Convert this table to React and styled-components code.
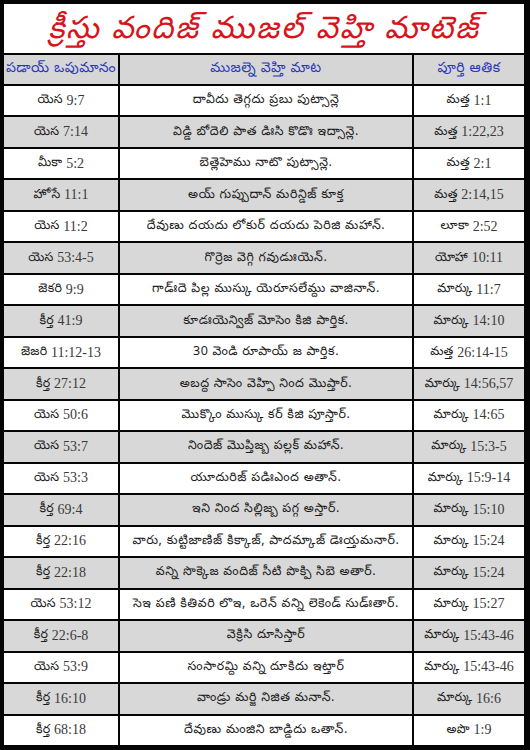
import React from 'react'
import styled, { createGlobalStyle } from 'styled-components'

const GlobalStyle = createGlobalStyle`
html, body {
  margin: 0;
  padding: 0;
  background: #000;
}
`

const StyledTable = styled.div`
box-sizing: border-box;
width: 530px;
height: 750px;
padding: 4px 6px 5px 4px;
background: #050505;
display: grid;
grid-template-columns: 114px 292px 110px;
grid-template-rows: 49px 29px repeat(21, 1fr);
gap: 2px;
font-family: 'Noto Sans Telugu', 'Noto Sans', 'DejaVu Sans', sans-serif;
`

const StyledTitle = styled.div`
grid-column: 1 / 4;
background: #fff;
display: flex;
align-items: center;
justify-content: center;
padding-top: 6px;
color: #d8141c;
font-size: 31px;
font-style: italic;
letter-spacing: 2px;
`

const StyledHead = styled.div`
background: #d6d6d6;
display: flex;
align-items: center;
justify-content: center;
color: #2a36c0;
font-size: 14px;
letter-spacing: 0.5px;
white-space: nowrap;
overflow: hidden;
`

const StyledCell = styled.div`
background: ${(props) => (props.shade ? '#d8d8d8' : '#fff')};
display: flex;
align-items: center;
justify-content: center;
color: #1a1a1a;
font-size: 12.5px;
letter-spacing: ${(props) => (props.wide ? '0.6px' : '0.2px')};
white-space: nowrap;
overflow: hidden;
`

const StyledRef = styled.span`
font-family: 'Liberation Serif', serif;
font-size: 14px;
letter-spacing: 0;
color: #3a3a3a;
`

const rows = [
  ['యెస', '9:7', 'దావీదు తెగ్గదు ప్రబు పుట్సాన్లె', 'మత్త', '1:1'],
  ['యెస', '7:14', 'విడ్డి బోదెలి పాత డిఃసి కొడొః ఇద్సాన్లె.', 'మత్త', '1:22,23'],
  ['మీకా', '5:2', 'బెత్లెహెము నాటొ పుట్సాన్లె.', 'మత్త', '2:1'],
  ['హోసే', '11:1', 'అయ్ గుప్పుదాన్ మరిన్డిజ్ కూక్త', 'మత్త', '2:14,15'],
  ['యెస', '11:2', 'దేవుణు దయదు లోకుర్ దయదు పెరిజి మహాన్.', 'లూకా', '2:52'],
  ['యెస', '53:4-5', 'గొర్రెజ వెగ్గి గవుడుఃయెన్.', 'యోహా', '10:11'],
  ['జెకరి', '9:9', 'గాడ్ఃదె పిల్ల ముస్కు యెరూసలేమ్దు వాజినాన్.', 'మార్కు', '11:7'],
  ['కీర్త', '41:9', 'కూడఃయెన్విజ్ మోసెం కిజి పార్తిక.', 'మార్కు', '14:10'],
  ['జెజరి', '11:12-13', '30 వెండి రూపాయ్ జ పార్తిక.', 'మత్త', '26:14-15'],
  ['కీర్త', '27:12', 'అబద్ద సాసెం వెహ్పి నింద మొప్తార్.', 'మార్కు', '14:56,57'],
  ['యెస', '50:6', 'మొక్కొం ముస్కు కర్ కిజి పూస్తార్.', 'మార్కు', '14:65'],
  ['యెస', '53:7', 'నిందెజ్ మొప్తిజ్బ పల్లక్ మహాన్.', 'మార్కు', '15:3-5'],
  ['యెస', '53:3', 'యూదురిజ్ పడిఃఎంద అతాన్.', 'మార్కు', '15:9-14'],
  ['కీర్త', '69:4', 'ఇని నింద సిల్లిజ్బ పగ్గ అస్తార్.', 'మార్కు', '15:10'],
  ['కీర్త', '22:16', 'వారు, కుట్టిజాణిజ్ కిక్కాజ్, పాదమ్కాజ్  డెఃయ్తమనార్.', 'మార్కు', '15:24'],
  ['కీర్త', '22:18', 'వన్ని సొక్కెజ వందిజ్ సీటి పొక్పి సిబె అతార్.', 'మార్కు', '15:24'],
  ['యెస', '53:12', 'సెఇ పణి కితివరి లొఇ, ఒరెన్ వన్ని లెకెండ్ సుడ్ఃతార్.', 'మార్కు', '15:27'],
  ['కీర్త', '22:6-8', 'వెక్రిసి దూసిస్తార్', 'మార్కు', '15:43-46'],
  ['యెస', '53:9', 'సంసారమ్ది వన్ని దూకిదు ఇట్తార్', 'మార్కు', '15:43-46'],
  ['కీర్త', '16:10', 'వాండ్రు మర్జి నిజిత మనాన్.', 'మార్కు', '16:6'],
  ['కీర్త', '68:18', 'దేవుణు మంజిని బాడ్డిదు ఒతాన్.', 'అపొ', '1:9'],
]

const App = () => {
  return (
    <>
      <GlobalStyle />
      <StyledTable>
        <StyledTitle>క్రీస్తు వందిజ్ ముజల్ వెహ్తి మాటెజ్</StyledTitle>
        <StyledHead>పడాయ్ ఒపుమానం</StyledHead>
        <StyledHead>ముజల్నె వెహ్తి మాట</StyledHead>
        <StyledHead>పూర్తి ఆతిక</StyledHead>
        {rows.map((r, i) => (
          <React.Fragment key={i}>
            <StyledCell shade={i % 2 === 1}>
              {r[0]}&nbsp;<StyledRef>{r[1]}</StyledRef>
            </StyledCell>
            <StyledCell shade={i % 2 === 1} wide>{r[2]}</StyledCell>
            <StyledCell shade={i % 2 === 1}>
              {r[3]}&nbsp;<StyledRef>{r[4]}</StyledRef>
            </StyledCell>
          </React.Fragment>
        ))}
      </StyledTable>
    </>
  )
}

export default App
